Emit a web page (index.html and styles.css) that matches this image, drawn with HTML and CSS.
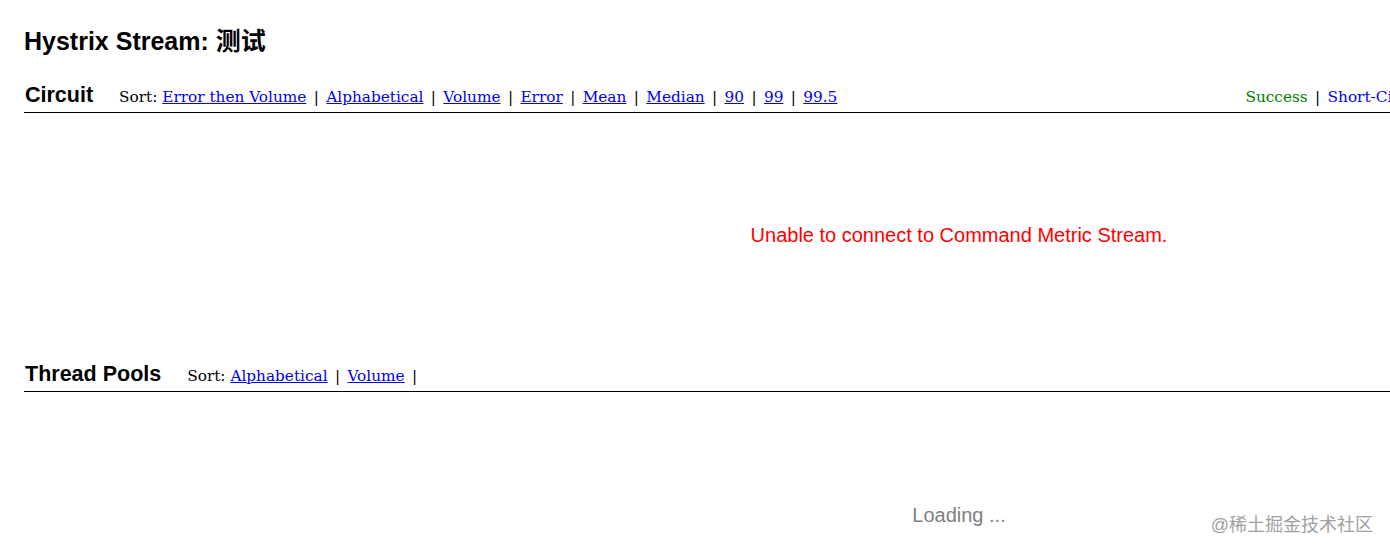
FILE: index.html
```html
<!DOCTYPE html>
<html>
<head>
<meta charset="utf-8">
<link rel="stylesheet" href="styles.css">
</head>
<body>
<div class="page">
  <h1 class="title">Hystrix Stream: 测试</h1>

  <section class="section">
    <div class="section-head">
      <div class="head-left">
        <span class="head-name">Circuit</span>
        <span class="sort">Sort: <a href="#">Error then Volume</a> <span class="sep">|</span> <a href="#">Alphabetical</a> <span class="sep">|</span> <a href="#">Volume</a> <span class="sep">|</span> <a href="#">Error</a> <span class="sep">|</span> <a href="#">Mean</a> <span class="sep">|</span> <a href="#">Median</a> <span class="sep">|</span> <a href="#">90</a> <span class="sep">|</span> <a href="#">99</a> <span class="sep">|</span> <a href="#">99.5</a></span>
      </div>
      <div class="legend"><span class="success">Success</span> <span class="sep">|</span> <span class="short">Short-Circuited</span> <span class="sep">|</span> <span class="bad">Bad Request</span> <span class="sep">|</span> <span class="timeout">Timeout</span> <span class="sep">|</span> <span class="rejected">Rejected</span> <span class="sep">|</span> <span class="failure">Failure</span> <span class="sep">|</span> <span class="errpct">Error %</span></div>
    </div>
    <div class="section-body circuit-body">
      <div class="error-msg">Unable to connect to Command Metric Stream.</div>
    </div>
  </section>

  <section class="section">
    <div class="section-head">
      <div class="head-left">
        <span class="head-name">Thread Pools</span>
        <span class="sort">Sort: <a href="#">Alphabetical</a> <span class="sep">|</span> <a href="#">Volume</a> <span class="sep">|</span></span>
      </div>
    </div>
    <div class="section-body pool-body">
      <div class="loading">Loading ...</div>
    </div>
  </section>
</div>
<div class="watermark">@稀土掘金技术社区</div>
</body>
</html>
```

FILE: styles.css
```css
html, body {
  margin: 0;
  padding: 0;
  background: #fff;
  overflow: hidden;
}
body {
  width: 1390px;
  height: 552px;
  position: relative;
  font-family: "Liberation Sans", Arial, "Noto Sans CJK SC", sans-serif;
}
.page {
  width: 1870px;
  padding-left: 24px;
  padding-top: 26px;
}
.title {
  margin: 0 0 27px 0;
  font-size: 25px;
  font-weight: bold;
  line-height: 30px;
  color: #000;
  font-family: "Liberation Sans", Arial, "Noto Sans CJK SC", sans-serif;
}
.section-head {
  display: flex;
  align-items: baseline;
  border-bottom: 1px solid #000;
  padding-bottom: 4px;
}
.head-left {
  display: flex;
  align-items: baseline;
}
.head-name {
  font-size: 21.5px;
  font-weight: bold;
  margin-left: 1px;
  margin-right: 26px;
}
.sort, .legend {
  font-family: "DejaVu Serif", "Liberation Serif", serif;
  font-size: 15.3px;
  color: #000;
}
.sort a {
  color: #0000ee;
  text-decoration: underline;
}
.sep { margin: 0 2.5px; }
.legend {
  margin-left: auto;
  white-space: nowrap;
}
.legend .success { color: #008000; }
.legend .short { color: #0000ee; }
.legend .bad { color: #00c4b4; }
.legend .timeout { color: #ffa500; }
.legend .rejected { color: #800080; }
.legend .failure { color: #ff0000; }
.legend .errpct { color: #000; }
.circuit-body {
  height: 249px;
  display: flex;
  justify-content: center;
  padding-top: 111px;
  box-sizing: border-box;
}
.error-msg {
  color: #ff0000;
  font-size: 20px;
}
.pool-body {
  display: flex;
  justify-content: center;
  padding-top: 112px;
}
.loading {
  color: #808080;
  font-size: 20px;
}
.watermark {
  position: absolute;
  right: 17px;
  bottom: 16px;
  font-size: 18px;
  color: #a0a0a0;
  font-family: "Liberation Sans", Arial, "Noto Sans CJK SC", sans-serif;
}
```
